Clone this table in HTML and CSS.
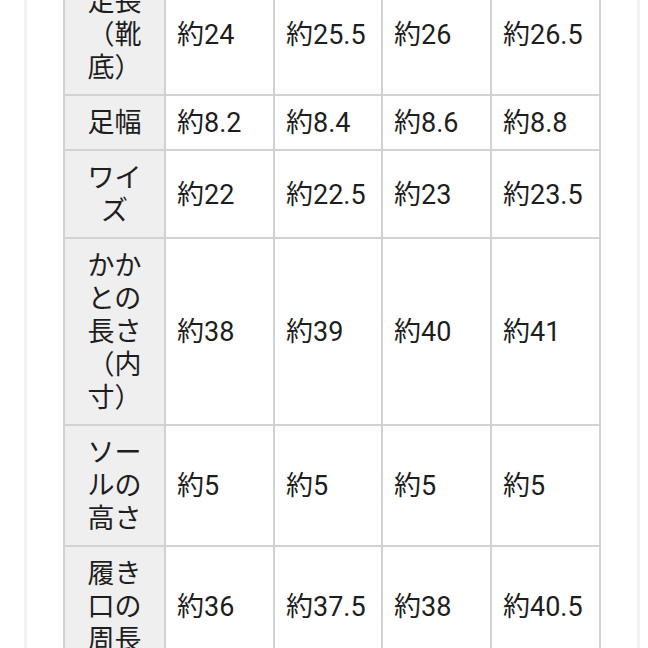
FILE: index.html
```html
<!DOCTYPE html>
<html lang="ja">
<head>
<meta charset="utf-8">
<link rel="stylesheet" href="styles.css">
</head>
<body>
<div class="page">
  <div class="frame">
    <table class="size-table">
      <colgroup>
        <col class="c-head">
        <col class="c-data">
        <col class="c-data3">
        <col class="c-data">
        <col class="c-data">
      </colgroup>
      <tbody>
        <tr>
          <th>足長<br>（靴<br>底）</th>
          <td>約24</td><td>約25.5</td><td>約26</td><td>約26.5</td>
        </tr>
        <tr>
          <th>足幅</th>
          <td>約8.2</td><td>約8.4</td><td>約8.6</td><td>約8.8</td>
        </tr>
        <tr>
          <th>ワイ<br>ズ</th>
          <td>約22</td><td>約22.5</td><td>約23</td><td>約23.5</td>
        </tr>
        <tr>
          <th>かか<br>との<br>長さ<br>（内<br>寸）</th>
          <td>約38</td><td>約39</td><td>約40</td><td>約41</td>
        </tr>
        <tr>
          <th>ソー<br>ルの<br>高さ</th>
          <td>約5</td><td>約5</td><td>約5</td><td>約5</td>
        </tr>
        <tr>
          <th>履き<br>口の<br>周長</th>
          <td>約36</td><td>約37.5</td><td>約38</td><td>約40.5</td>
        </tr>
      </tbody>
    </table>
  </div>
</div>
</body>
</html>
```
FILE: styles.css
```css
html, body {
  margin: 0;
  padding: 0;
  background: #ffffff;
}
body {
  font-family: Roboto, "Noto Sans CJK JP", sans-serif;
  color: #1e1e1e;
  overflow: hidden;
}
.page {
  padding-left: 24px;
  margin-top: -27px;
}
.frame {
  width: 610px;
  border-left: 3px solid #f2f2f2;
  border-right: 3px solid #f2f2f2;
  padding-bottom: 40px;
}
.size-table {
  margin-left: 36px;
  table-layout: fixed;
  width: 538px;
  border-collapse: separate;
  border-spacing: 0;
  border-left: 2px solid #d2d2d2;
  border-top: 2px solid #d2d2d2;
  font-size: 27px;
  line-height: 33px;
}
.c-head { width: 101px; }
.c-data { width: 109px; }
.c-data3 { width: 108px; }
.size-table th,
.size-table td {
  border-right: 2px solid #d2d2d2;
  border-bottom: 2px solid #d2d2d2;
  padding: 11px 0 9px;
  vertical-align: middle;
  white-space: nowrap;
}
.size-table th {
  background: #efefef;
  font-weight: normal;
  text-align: center;
}
.size-table td {
  text-align: left;
  padding-left: 11px;
}
```
